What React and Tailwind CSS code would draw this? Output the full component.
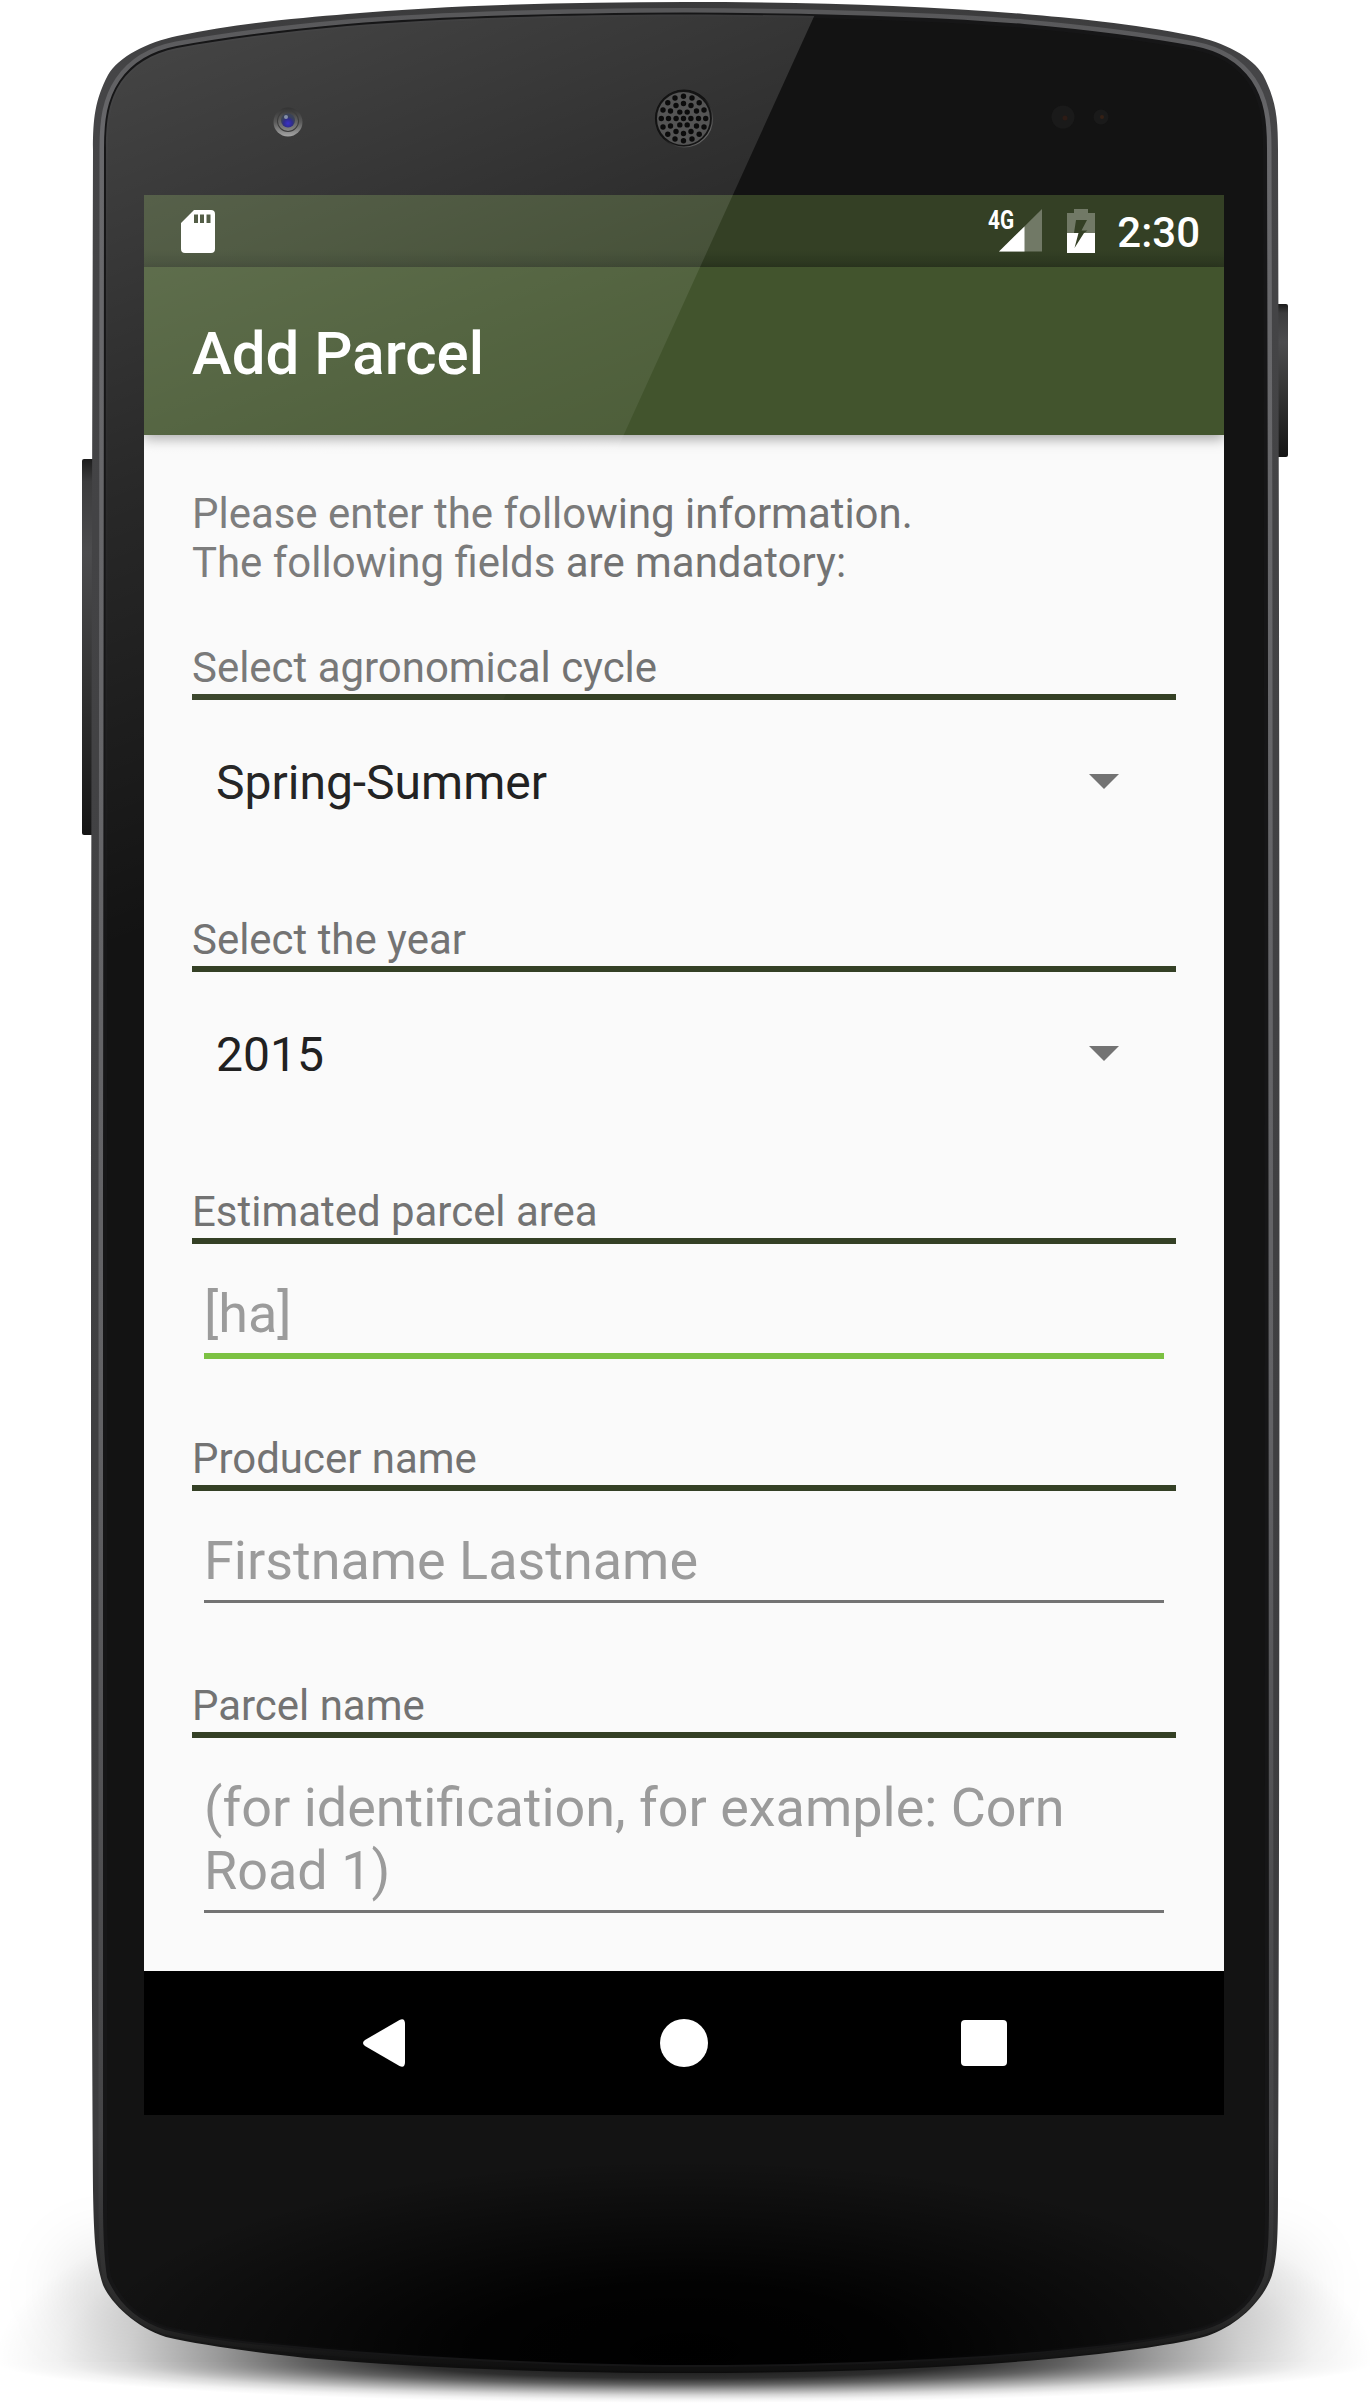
import React from "react";

const OUTLINE =
  "M685.500 2 C800 2 920 5 1024 14 C1071 18 1131 23 1194 36 C1223 42 1253 57 1263 75 C1276 100 1278 118 1278 150 C1279 500 1279.500 900 1279.500 1200 C1279.500 1600 1279 2000 1278 2190 C1278 2240 1277 2258 1272 2275 C1264 2300 1237 2326 1207 2336 C1180 2344 1120 2352 1070 2357 C960 2368 830 2373 685 2373 C570 2373 430 2369 306 2358 C260 2353 200 2345 166 2337 C135 2327 111 2303 103 2285 C96 2262 94 2245 93 2190 C91 1900 91 1500 91 1200 C91 900 92 500 93 150 C93 118 95 100 108 75 C118 57 148 42 177 36 C240 23 300 18 347 14 C450 5 570 2 685.500 2 Z";

const GLASS =
  "M685.500 14.500 C820 15 930 18 1024 26 C1080 31 1140 38 1194 48 C1220 53 1239 66 1250 82 C1262 100 1265 120 1265 148 C1266 500 1266.500 900 1266.500 1200 L1267 2200 C1267 2240 1266 2256 1262 2275 C1252 2303 1230 2320 1203 2328 C1170 2337 1120 2344 1068 2349 C960 2360 820 2365 685.500 2365 C570 2365 400 2357 262 2343 C230 2340 195 2335 166 2328 C135 2318 118 2298 109 2277 C106 2258 105 2240 105 2200 L105 1200 C105 900 106 500 106 148 C106 120 109 100 121 82 C132 66 151 53 177 48 C231 38 291 31 347 26 C441 18 551 15 685.500 14.500 Z";

const HOLE_RINGS = [
  { count: 1, radius: 0 },
  { count: 6, radius: 7.4 },
  { count: 12, radius: 15 },
  { count: 16, radius: 22.2 },
];

const HOLES = HOLE_RINGS.flatMap(({ count, radius }) =>
  Array.from({ length: count }, (_, i) => {
    const angle = (i / count) * Math.PI * 2;
    return [683.5 + radius * Math.cos(angle), 118.5 + radius * Math.sin(angle)];
  })
);

function DeviceBody() {
  return (
    <svg className="absolute inset-0" width="1370" height="2405" viewBox="0 0 1370 2405" aria-hidden="true">
      <defs>
        <radialGradient id="castShadow">
          <stop offset="0" stopOpacity="0.95" />
          <stop offset="0.4" stopOpacity="0.82" />
          <stop offset="0.55" stopOpacity="0.62" />
          <stop offset="0.68" stopOpacity="0.38" />
          <stop offset="0.81" stopOpacity="0.16" />
          <stop offset="0.91" stopOpacity="0.05" />
          <stop offset="1" stopOpacity="0" />
        </radialGradient>
        <filter id="soft" x="-10%" y="-100%" width="120%" height="300%">
          <feGaussianBlur stdDeviation="28" />
        </filter>
        <linearGradient id="rim" x1="0" x2="0" y1="0" y2="1">
          <stop offset="0" stopColor="#3a3a3b" />
          <stop offset="0.03" stopColor="#454547" />
          <stop offset="0.9" stopColor="#3c3c3e" />
          <stop offset="0.97" stopColor="#262626" />
          <stop offset="1" stopColor="#0c0c0c" />
        </linearGradient>
        <linearGradient id="rimLight" x1="0" x2="0" y1="0" y2="1">
          <stop offset="0" stopColor="#58585a" />
          <stop offset="0.05" stopColor="#69696c" />
          <stop offset="0.6" stopColor="#626265" />
          <stop offset="0.9" stopColor="#444446" />
          <stop offset="0.98" stopColor="#2a2a2a" />
          <stop offset="1" stopColor="#101010" />
        </linearGradient>
        <radialGradient id="chin" gradientUnits="userSpaceOnUse" cx="0" cy="0" r="1" gradientTransform="translate(685 2350) scale(600 190)">
          <stop offset="0" stopColor="#000" />
          <stop offset="0.35" stopColor="#000" stopOpacity="0.9" />
          <stop offset="0.7" stopColor="#000" stopOpacity="0.4" />
          <stop offset="1" stopColor="#000" stopOpacity="0" />
        </radialGradient>
        <linearGradient id="key" x1="0" x2="0" y1="0" y2="1">
          <stop offset="0" stopColor="#1c1c1c" />
          <stop offset="0.06" stopColor="#3c3c3d" />
          <stop offset="0.25" stopColor="#4c4c4e" />
          <stop offset="0.6" stopColor="#333" />
          <stop offset="1" stopColor="#141414" />
        </linearGradient>
        <clipPath id="upper"><rect x="0" y="2000" width="1370" height="362" /></clipPath>
        <clipPath id="lower"><rect x="0" y="2362" width="1370" height="43" /></clipPath>
      </defs>
      <g clipPath="url(#upper)">
        <rect x="60" y="2245" width="1250" height="90" rx="40" fillOpacity="0.09" filter="url(#soft)" />
        <ellipse cx="685" cy="2362" rx="690" ry="215" fill="url(#castShadow)" />
      </g>
      <ellipse cx="685" cy="2362" rx="690" ry="41" fill="url(#castShadow)" clipPath="url(#lower)" />
      <rect x="82" y="459" width="14" height="376" rx="2" fill="url(#key)" />
      <rect x="1274" y="304" width="14" height="153" rx="2" fill="url(#key)" />
      <path d={OUTLINE} fill="url(#rim)" />
      <path d={GLASS} fill="none" stroke="url(#rimLight)" strokeWidth="13" />
      <path d={GLASS} fill="#131313" stroke="#161617" strokeWidth="4" />
      <path d={GLASS} fill="url(#chin)" />
    </svg>
  );
}

function DeviceGloss() {
  return (
    <svg className="pointer-events-none absolute inset-0" width="1370" height="2405" viewBox="0 0 1370 2405" aria-hidden="true">
      <defs>
        <linearGradient id="gloss" gradientUnits="userSpaceOnUse" x1="200" y1="20" x2="500" y2="800">
          <stop offset="0" stopColor="#fff" stopOpacity="0.21" />
          <stop offset="0.5" stopColor="#fff" stopOpacity="0.09" />
          <stop offset="1" stopColor="#fff" stopOpacity="0" />
        </linearGradient>
        <clipPath id="glassClip"><path d={GLASS} /></clipPath>
        <linearGradient id="lens" x1="0" x2="0" y1="0" y2="1">
          <stop offset="0" stopColor="#333" />
          <stop offset="0.5" stopColor="#5a5a5a" />
          <stop offset="1" stopColor="#a5a5a5" />
        </linearGradient>
        <linearGradient id="lensInner" x1="0" x2="0" y1="0" y2="1">
          <stop offset="0" stopColor="#3c3c3c" />
          <stop offset="1" stopColor="#858585" />
        </linearGradient>
        <radialGradient id="iris" cx="0.5" cy="0.7">
          <stop offset="0" stopColor="#3a30c8" />
          <stop offset="0.6" stopColor="#2f2c8c" />
          <stop offset="1" stopColor="#3a4258" />
        </radialGradient>
        <linearGradient id="mesh" x1="0" x2="1" y1="0" y2="1">
          <stop offset="0.5" stopColor="#111" />
          <stop offset="1" stopColor="#888" />
        </linearGradient>
      </defs>
      <path d="M0 0 H821.500 L92 1604 H0 Z" fill="url(#gloss)" clipPath="url(#glassClip)" />
      <circle cx="288" cy="122" r="14.500" fill="url(#lens)" />
      <circle cx="288" cy="121" r="11" fill="#3c3c3c" />
      <circle cx="288" cy="121" r="10" fill="url(#lensInner)" />
      <circle cx="288" cy="120.500" r="7" fill="url(#iris)" />
      <circle cx="286" cy="117" r="2" fill="#8590a8" />
      <circle cx="684" cy="118.500" r="28.500" fill="#141414" stroke="url(#mesh)" strokeWidth="1.200" />
      <circle cx="683.500" cy="118.500" r="26.500" fill="#545454" />
      {HOLES.map(([x, y]) => (
        <circle key={`${x}-${y}`} cx={x} cy={y} r="2.700" fill="#0b0b0b" />
      ))}
      <circle cx="1063" cy="117" r="11.500" fill="#1a1a1a" />
      <circle cx="1065" cy="118" r="2.500" fill="#2d1b15" />
      <circle cx="1101" cy="117" r="7.500" fill="#1a1a1a" />
      <circle cx="1102" cy="117" r="2" fill="#352015" />
    </svg>
  );
}

function StatusBar() {
  return (
    <div className="flex h-[72px] shrink-0 items-center bg-[linear-gradient(#344025_75%,#2c3720)] pr-[24px] pl-[37px] text-white">
      <svg width="34" height="43" viewBox="0 0 34 43">
        <path fill="#fff" fillRule="evenodd" d="M13 0 H30 Q34 0 34 4 V39 Q34 43 30 43 H4 Q0 43 0 39 V13 Z M13 4.500 V13 H17 V4.500 Z M19 4.500 V13 H23 V4.500 Z M25.500 4.500 V13 H29.500 V4.500 Z" />
      </svg>
      <div className="ml-auto flex items-center">
        <svg className="overflow-visible" width="54" height="44" viewBox="0 0 54 44">
          <path d="M54 0 V42.500 H11 Z" fill="#fff" fillOpacity="0.3" />
          <path d="M36.500 17.500 V42.500 H11 Z" fill="#fff" />
          <text transform="translate(0 19.500) scale(0.8 1)" fontFamily="Roboto" fontWeight="700" fontSize="26" fill="#fff">4G</text>
        </svg>
        <svg className="ml-[25px]" width="28" height="44" viewBox="0 0 28 44">
          <path fill="#fff" fillOpacity="0.3" fillRule="evenodd" d="M7 0 H21 V4 H28 V24 H17 L20.500 21.500 H14.500 L20 11 H9 L7 24 H0 V4 H7 Z" />
          <path fill="#fff" fillRule="evenodd" d="M0 24 H11.500 L7.500 39 L17 24 H28 V44 H0 Z" />
        </svg>
        <span className="ml-[22px] pt-[2px] text-[42px] leading-[49px] font-medium">2:30</span>
      </div>
    </div>
  );
}

function AppBar({ title }) {
  return (
    <header className="relative flex h-[168px] shrink-0 items-center bg-[#42542d] px-12 pt-[5px] shadow-[0_4px_12px_rgba(0,0,0,0.35)]">
      <h1 className="text-[60px] leading-[70px] font-medium text-white">{title}</h1>
    </header>
  );
}

function Field({ label, children }) {
  return (
    <section>
      <div className="border-b-[6px] border-[#344025] pb-[2px] text-[41.94px] leading-[49px] text-[#737373]">{label}</div>
      {children}
    </section>
  );
}

function Spinner({ value }) {
  return (
    <div className="mt-[7px] mb-[59px] flex h-[149px] items-center justify-between pr-[57px] pl-6 text-[48px] text-[#212121]">
      <span className="pt-[2px]">{value}</span>
      <svg width="30" height="15" viewBox="0 0 30 15">
        <path d="M0 0 H30 L15 15 Z" fill="#737373" />
      </svg>
    </div>
  );
}

function TextInput({ hint, focused }) {
  return (
    <div
      className={
        focused
          ? "mx-3 border-b-[6px] border-[#7cc142] pt-[38px] pb-[8px] text-[53.95px] leading-[63px] text-[#9b9b9b]"
          : "mx-3 mb-[3px] border-b-[3px] border-[#737373] pt-[38px] pb-[8px] text-[53.95px] leading-[63px] text-[#9b9b9b]"
      }
    >
      {hint}
    </div>
  );
}

function Form() {
  return (
    <main className="flex-1 bg-[#fafafa] px-12 pt-[54px]">
      <p className="mb-[56px] text-[41.94px] leading-[49px] text-[#737373]">
        Please enter the following information.
        <br />
        The following fields are mandatory:
      </p>
      <Field label="Select agronomical cycle">
        <Spinner value="Spring-Summer" />
      </Field>
      <Field label="Select the year">
        <Spinner value="2015" />
      </Field>
      <div className="flex flex-col gap-[75px]">
        <Field label="Estimated parcel area">
          <TextInput hint="[ha]" focused />
        </Field>
        <Field label="Producer name">
          <TextInput hint="Firstname Lastname" />
        </Field>
        <Field label="Parcel name">
          <TextInput hint="(for identification, for example: Corn Road 1)" />
        </Field>
      </div>
    </main>
  );
}

function NavBar() {
  return (
    <nav className="flex h-36 shrink-0 items-center justify-between bg-black pr-[217px] pl-[219px]">
      <svg width="42" height="48" viewBox="0 0 42 48">
        <path d="M36.500 1 Q42 -1.500 42 5 V43 Q42 49.500 36.500 47 L2 27 Q-2 24 2 21 Z" fill="#fff" />
      </svg>
      <div className="ml-[2px] size-12 rounded-full bg-white" />
      <div className="size-[46px] rounded-[4px] bg-white" />
    </nav>
  );
}

export default function App() {
  return (
    <div className="relative h-[2405px] w-[1370px] overflow-hidden bg-white font-[Roboto,sans-serif]">
      <DeviceBody />
      <div className="relative flex justify-center pt-[195px] pr-[2px]">
        <div className="flex h-[1920px] w-[1080px] flex-col overflow-hidden">
          <StatusBar />
          <AppBar title="Add Parcel" />
          <Form />
          <NavBar />
        </div>
      </div>
      <DeviceGloss />
    </div>
  );
}
